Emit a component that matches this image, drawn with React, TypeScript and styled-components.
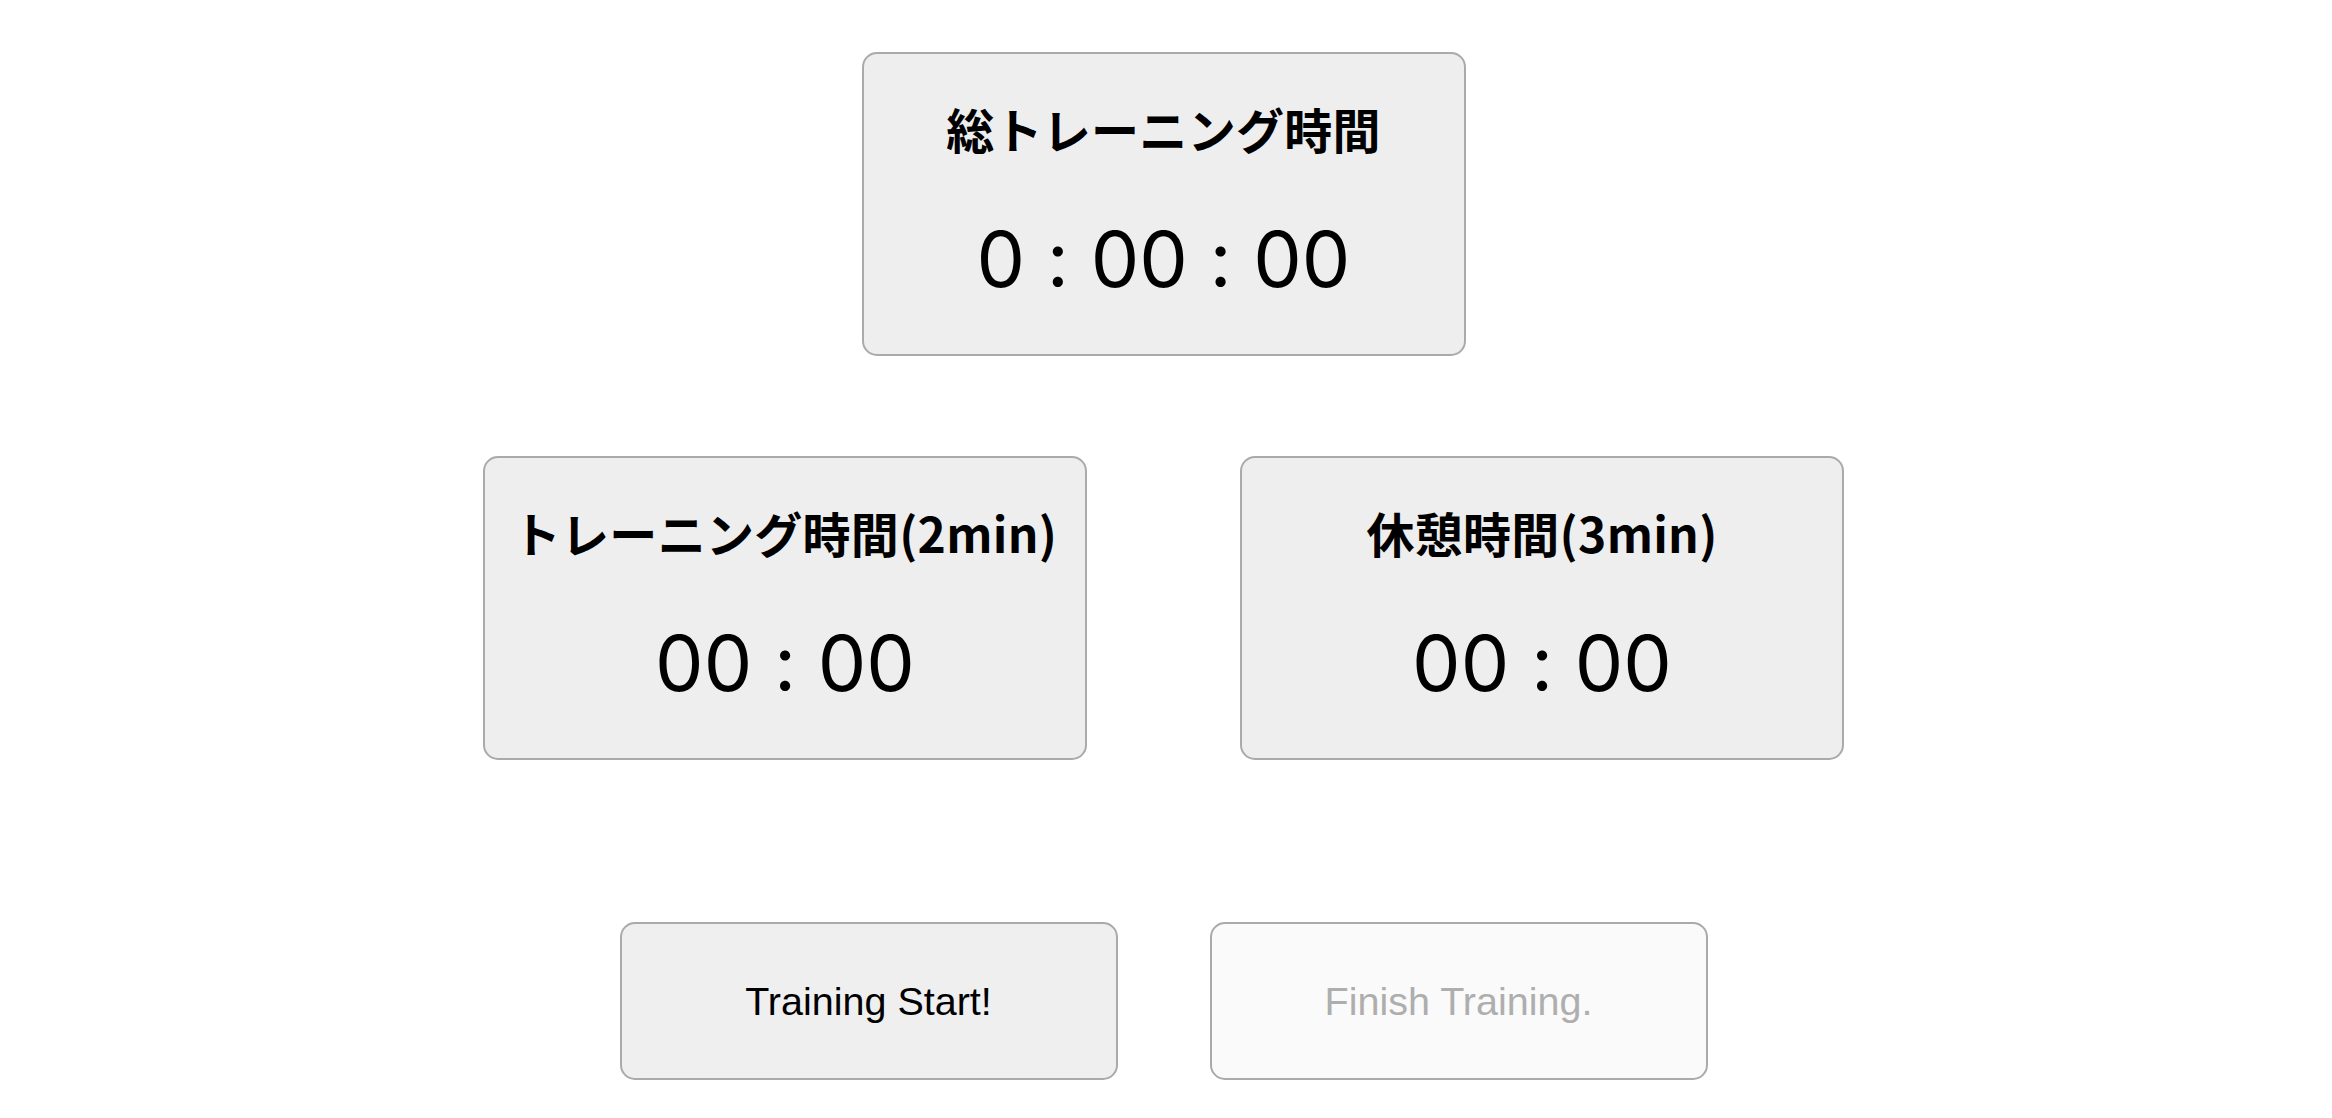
import React from 'react';
import styled, { createGlobalStyle } from 'styled-components';

const GlobalStyle = createGlobalStyle`
	html,
	body {
		margin: 0;
		padding: 0;
		background: #fff;
	}
`;

const Page = styled.div`
	display: flex;
	flex-direction: column;
	align-items: center;
	padding: 52px 5px 0 0;
`;

const Card = styled.div`
	box-sizing: border-box;
	width: 604px;
	height: 304px;
	padding-top: 44px;
	background: #eee;
	border: 2px solid #aaa;
	border-radius: 15px;
	text-align: center;
`;

const Title = styled.div`
	font-family: 'Noto Sans CJK JP', sans-serif;
	font-size: 48px;
	font-weight: 700;
	line-height: 60px;
	letter-spacing: 0.3px;
	color: #000;
`;

const Time = styled.div`
	margin-top: 56px;
	font-family: Inter, 'Noto Sans CJK JP', sans-serif;
	font-size: 77px;
	font-weight: 400;
	line-height: 90px;
	font-feature-settings: 'calt' 0;
	color: #000;
`;

const CardRow = styled.div<{ $gap: number; $top: number }>`
	display: flex;
	gap: ${(p) => p.$gap}px;
	margin-top: ${(p) => p.$top}px;
`;

const ActionButton = styled.button`
	box-sizing: border-box;
	width: 498px;
	height: 158px;
	padding: 0;
	background: #efefef;
	border: 2px solid #aaa;
	border-radius: 15px;
	font-family: 'Liberation Sans', Arial, sans-serif;
	font-size: 39.5px;
	color: #000;

	&:disabled {
		background: #fafafa;
		color: #aeaeae;
	}
`;

interface TimerCardProps {
	label: string;
	time: string;
}

const TimerCard: React.FC<TimerCardProps> = ({ label, time }) => (
	<Card>
		<Title>{label}</Title>
		<Time>{time}</Time>
	</Card>
);

const App: React.FC = () => {
	return (
		<>
			<GlobalStyle />
			<Page>
				<TimerCard label='総トレーニング時間' time='0 : 00 : 00' />
				<CardRow $gap={153} $top={100}>
					<TimerCard label='トレーニング時間(2min)' time='00 : 00' />
					<TimerCard label='休憩時間(3min)' time='00 : 00' />
				</CardRow>
				<CardRow $gap={92} $top={162}>
					<ActionButton>Training Start!</ActionButton>
					<ActionButton disabled>Finish Training.</ActionButton>
				</CardRow>
			</Page>
		</>
	);
};

export default App;
